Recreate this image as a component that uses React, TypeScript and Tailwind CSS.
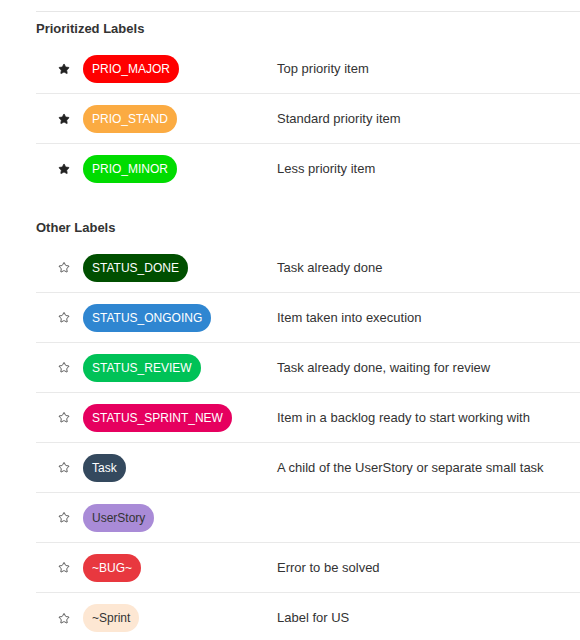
import React, { FunctionComponent } from "react";
import { Star } from "lucide-react";

type Label = {
  name: string;
  description: string;
  badge: string;
};

const prioritized: Label[] = [
  { name: "PRIO_MAJOR", description: "Top priority item", badge: "bg-[#ff0000] text-white" },
  { name: "PRIO_STAND", description: "Standard priority item", badge: "bg-[#fbab42] text-white" },
  { name: "PRIO_MINOR", description: "Less priority item", badge: "bg-[#00dc00] text-white" },
];

const others: Label[] = [
  { name: "STATUS_DONE", description: "Task already done", badge: "bg-[#004f00] text-white" },
  { name: "STATUS_ONGOING", description: "Item taken into execution", badge: "bg-[#2f86d1] text-white" },
  { name: "STATUS_REVIEW", description: "Task already done, waiting for review", badge: "bg-[#00c257] text-white" },
  { name: "STATUS_SPRINT_NEW", description: "Item in a backlog ready to start working with", badge: "bg-[#e6005f] text-white" },
  { name: "Task", description: "A child of the UserStory or separate small task", badge: "bg-[#34495e] text-white" },
  { name: "UserStory", description: "", badge: "bg-[#a98bd7] text-[#333]" },
  { name: "~BUG~", description: "Error to be solved", badge: "bg-[#e8383f] text-white" },
  { name: "~Sprint", description: "Label for US", badge: "bg-[#fde7d3] text-[#333]" },
];

const LabelRow: FunctionComponent<{ label: Label; starred: boolean; last: boolean }> = ({
  label,
  starred,
  last,
}) => (
  <li className={`flex items-center h-[50px] ${last ? "" : "border-b border-[#e9e9e9]"}`}>
    <span className="ml-[22px] w-[12px] flex justify-center">
      {starred ? (
        <Star size={12} strokeWidth={1.5} fill="#222" color="#222" />
      ) : (
        <Star size={13} strokeWidth={1.6} color="#333" />
      )}
    </span>
    <span className="ml-[13px] w-[194px] flex">
      <span className={`h-[28px] leading-[28px] px-[9px] rounded-full text-[12px] ${label.badge}`}>
        {label.name}
      </span>
    </span>
    <span className="text-[13px] text-[#333]">{label.description}</span>
  </li>
);

const App: FunctionComponent = () => {
  return (
    <div className="w-[580px] h-[640px] overflow-hidden bg-white font-['Liberation_Sans',Arial,sans-serif]">
      <div className="ml-[36px] mt-[11px] border-t border-[#e6e6e6]">
        {/* prioritized */}
        <h2 className="h-[32px] pt-[9px] leading-[16px] text-[13px] font-bold text-[#333]">
          Prioritized Labels
        </h2>
        <ul className="list-none">
          {prioritized.map((label, i) => (
            <LabelRow key={label.name} label={label} starred={true} last={i === prioritized.length - 1} />
          ))}
        </ul>

        {/* others */}
        <h2 className="mt-[18px] h-[31px] pt-[8px] leading-[16px] text-[13px] font-bold text-[#333]">
          Other Labels
        </h2>
        <ul className="list-none">
          {others.map((label, i) => (
            <LabelRow key={label.name} label={label} starred={false} last={i === others.length - 1} />
          ))}
        </ul>
      </div>
    </div>
  );
};

export default App;
